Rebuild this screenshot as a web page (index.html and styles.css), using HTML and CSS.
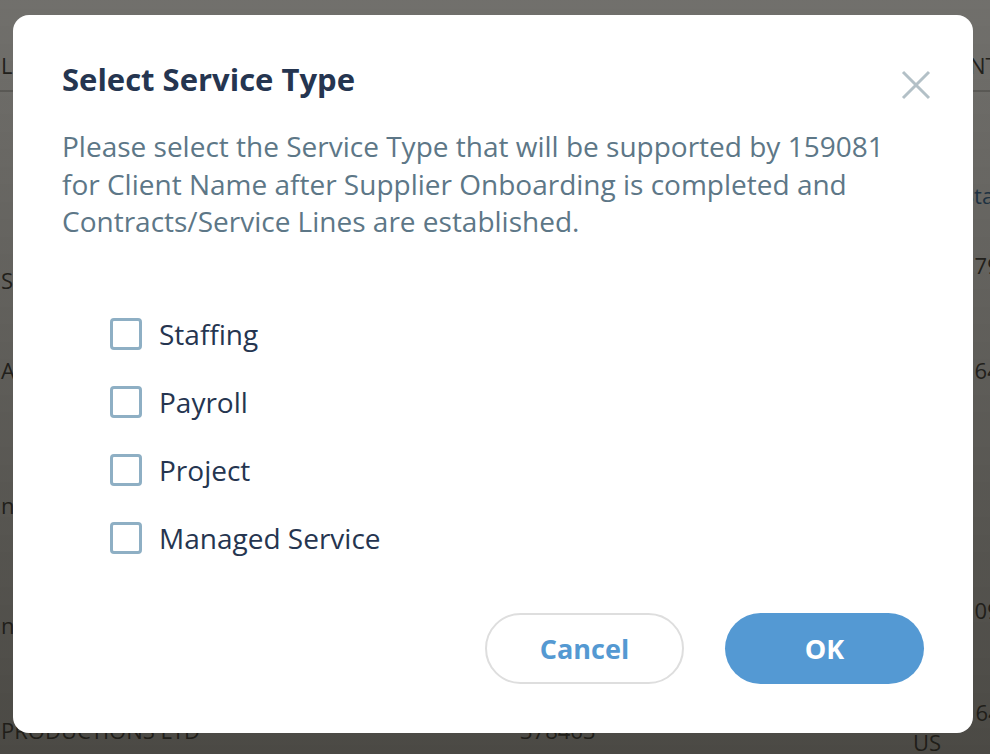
FILE: index.html
```html
<!DOCTYPE html>
<html lang="en">
<head>
<meta charset="utf-8">
<title>Select Service Type</title>
<link rel="stylesheet" href="styles.css">
</head>
<body>
<div class="page">
  <div class="bg-row bg-head">
    <div class="cell">LEGAL NAME</div>
    <div class="cell"></div>
    <div class="cell cell-head">NTRY</div>
  </div>
  <div class="bg-row r1">
    <div class="cell"></div>
    <div class="cell"></div>
    <div class="cell cell-num link pad-88">Status</div>
  </div>
  <div class="bg-row r2">
    <div class="cell pad-33">Smith Staffing</div>
    <div class="cell"></div>
    <div class="cell cell-num pad-18">179</div>
  </div>
  <div class="bg-row r3">
    <div class="cell pad-33">Acme Holdings</div>
    <div class="cell"></div>
    <div class="cell cell-num pad-33">164</div>
  </div>
  <div class="bg-row r4">
    <div class="cell pad-50">national</div>
    <div class="cell"></div>
    <div class="cell"></div>
  </div>
  <div class="bg-row r5">
    <div class="cell pad-50">network</div>
    <div class="cell"></div>
    <div class="cell cell-num pad-35">109</div>
  </div>
  <div class="bg-row r6">
    <div class="cell pad-35">PRODUCTIONS LTD</div>
    <div class="cell cell-mid pad-35">378463</div>
    <div class="cell pad-17">
      <div class="cell-num">164</div>
      <div class="cell-country">US</div>
    </div>
  </div>
</div>

<div class="backdrop"></div>

<div class="modal" role="dialog" aria-labelledby="modal-title">
  <div class="modal-header">
    <h2 class="modal-title" id="modal-title">Select Service Type</h2>
    <button class="close-btn" aria-label="Close">
      <svg width="30" height="30" viewBox="0 0 30 30"><path d="M2 2 L28 28 M28 2 L2 28" stroke="#b3c0c7" stroke-width="3" fill="none"/></svg>
    </button>
  </div>
  <p class="modal-desc">Please select the Service Type that will be supported by 159081 for Client Name after Supplier Onboarding is completed and Contracts/Service Lines are established.</p>
  <ul class="options">
    <li class="option"><span class="box"></span><span class="label">Staffing</span></li>
    <li class="option"><span class="box"></span><span class="label">Payroll</span></li>
    <li class="option"><span class="box"></span><span class="label">Project</span></li>
    <li class="option"><span class="box"></span><span class="label">Managed Service</span></li>
  </ul>
  <div class="actions">
    <button class="btn btn-cancel">Cancel</button>
    <button class="btn btn-ok">OK</button>
  </div>
</div>
</body>
</html>
```

FILE: styles.css
```css
html, body {
  margin: 0;
  padding: 0;
  width: 990px;
  height: 754px;
  overflow: hidden;
  background: #ffffff;
  font-family: "Open Sans", "Liberation Sans", sans-serif;
}

.page {
  padding-top: 50px;
  color: #2a2a2a;
  font-size: 22px;
  line-height: 30px;
}

.bg-row {
  display: grid;
  grid-template-columns: 520px 392px 78px;
}

.cell {
  padding-left: 1px;
  white-space: nowrap;
  overflow: hidden;
}

.bg-head {
  height: 40px;
  border-bottom: 2px solid #c9c9c9;
}

.r1 { height: 140px; }
.r2 { height: 90px; }
.r3 { height: 118px; }
.r4 { height: 120px; }
.r5 { height: 120px; }
.r6 { height: 80px; }

.pad-17 { padding-top: 17px; }
.pad-18 { padding-top: 18px; }
.pad-33 { padding-top: 33px; }
.pad-35 { padding-top: 35px; }
.pad-50 { padding-top: 50px; }
.pad-88 { padding-top: 88px; }

.cell-head { padding-left: 57px; }
.cell-num { padding-left: 50px; }
.cell-country { padding-left: 0; }
.cell-mid { padding-left: 0; }
.link { color: #1d5f9c; }

.backdrop {
  position: fixed;
  inset: 0;
  background: linear-gradient(to bottom, rgba(30, 28, 22, 0.63), rgba(30, 28, 22, 0.8));
}

.modal {
  position: fixed;
  left: 13px;
  top: 15px;
  width: 960px;
  height: 718px;
  box-sizing: border-box;
  background: #ffffff;
  border-radius: 16px;
  padding: 45px 49px 49px 49px;
  display: flex;
  flex-direction: column;
}

.modal-header {
  display: flex;
  justify-content: space-between;
  align-items: flex-start;
}

.modal-title {
  margin: 0;
  font-size: 31px;
  line-height: 38px;
  font-weight: 700;
  color: #253550;
}

.close-btn {
  border: 0;
  background: none;
  padding: 0;
  margin: 10px -7px 0 0;
  width: 30px;
  height: 30px;
  display: flex;
  align-items: center;
  justify-content: center;
  cursor: pointer;
}

.modal-desc {
  margin: 28px 0 0 0;
  width: 840px;
  font-size: 28px;
  line-height: 37.5px;
  color: #5d7787;
}

.options {
  list-style: none;
  margin: 59px 0 0 48px;
  padding: 0;
}

.option {
  display: flex;
  align-items: center;
  height: 68px;
}

.box {
  width: 32px;
  height: 32px;
  box-sizing: border-box;
  border: 3px solid #8eafc4;
  border-radius: 4px;
  background: #fff;
  flex: none;
}

.label {
  margin-left: 17px;
  font-size: 28px;
  color: #253550;
}

.actions {
  margin-top: auto;
  display: flex;
  justify-content: flex-end;
  gap: 41px;
}

.btn {
  height: 71px;
  width: 199px;
  border-radius: 36px;
  font-family: "Open Sans", "Liberation Sans", sans-serif;
  font-size: 27px;
  font-weight: 700;
  cursor: pointer;
}

.btn-cancel {
  background: #fff;
  border: 2px solid #dedede;
  color: #5499d2;
}

.btn-ok {
  background: #5499d3;
  border: 0;
  color: #fff;
}
```
